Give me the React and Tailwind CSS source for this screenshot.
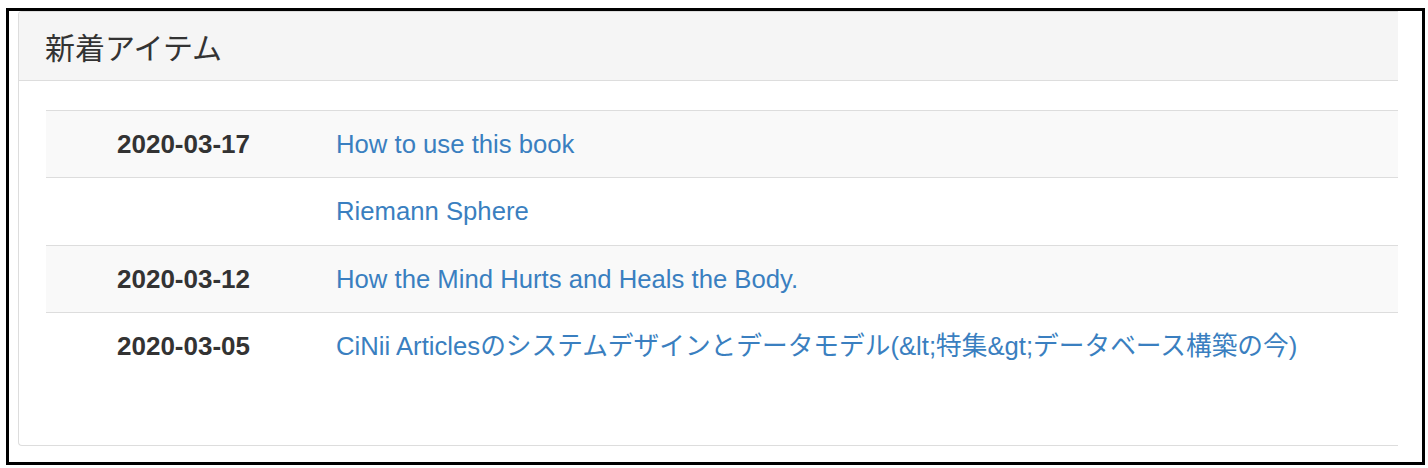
const items = [
  { date: "2020-03-17", title: "How to use this book", h: "h-[67px]", striped: true },
  { date: "", title: "Riemann Sphere", h: "h-[68px]", striped: false },
  { date: "2020-03-12", title: "How the Mind Hurts and Heals the Body.", h: "h-[67px]", striped: true },
  {
    date: "2020-03-05",
    title: "CiNii Articlesのシステムデザインとデータモデル(&lt;特集&gt;データベース構築の今)",
    h: "h-[68px]",
    striped: false,
  },
];

export default function App() {
  return (
    <div className="w-[1428px] h-[468px] bg-white pt-[8px] pl-[6px] font-['Liberation_Sans','Noto_Sans_CJK_JP',sans-serif]">
      <div className="w-[1419px] h-[457px] border-[3px] border-black pl-[9px] overflow-hidden">
        <div className="w-[1380px] h-[435px] border-l border-t border-b border-[#dddddd] rounded-l-[4px] overflow-hidden flex flex-col">
          <div className="h-[69px] shrink-0 bg-[#f5f5f5] border-b border-[#dddddd] flex items-center pl-[26px]">
            <h3 className="text-[30px] leading-none text-[#333333] font-normal font-['Noto_Sans_CJK_JP',sans-serif]">
              新着アイテム
            </h3>
          </div>
          <div className="flex-1 pt-[29px] pl-[27px]">
            <ul className="w-[1352px]">
              {items.map((item, i) => (
                <li
                  key={i}
                  className={`${item.h} flex items-center border-t border-[#dddddd] ${
                    item.striped ? "bg-[#f9f9f9]" : "bg-white"
                  }`}
                >
                  <span className="w-[290px] pl-[71px] text-[26px] font-bold text-[#333333]">
                    {item.date}
                  </span>
                  <a href="#" className="text-[25.7px] text-[#3a7fc0] whitespace-nowrap">
                    {item.title}
                  </a>
                </li>
              ))}
            </ul>
          </div>
        </div>
      </div>
    </div>
  );
}
